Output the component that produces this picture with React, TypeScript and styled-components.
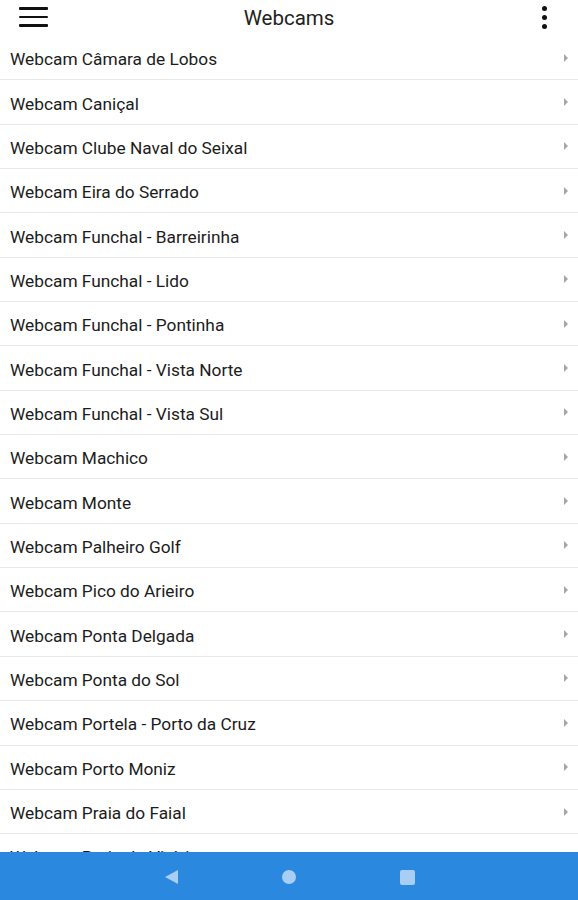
import styled, { createGlobalStyle } from 'styled-components';

const GlobalStyle = createGlobalStyle`
  html, body {
    margin: 0;
    padding: 0;
    background: #fff;
  }
  body {
    font-family: Roboto, 'Noto Sans', sans-serif;
  }
`;

const Screen = styled.div`
  width: 578px;
  height: 900px;
  display: flex;
  flex-direction: column;
  overflow: hidden;
  background: #fff;
`;

const Toolbar = styled.header`
  height: 36px;
  flex-shrink: 0;
  display: grid;
  grid-template-columns: 66px 1fr 66px;
  align-items: center;
`;

const MenuButton = styled.div`
  display: flex;
  flex-direction: column;
  gap: 6px;
  width: 29px;
  margin-left: 19px;
  margin-top: -2px;
  span {
    height: 2.6px;
    background: #111;
    border-radius: 1px;
  }
`;

const Title = styled.h1`
  margin: 0;
  text-align: center;
  font-size: 20.5px;
  font-weight: 400;
  color: #222;
  margin-top: -1px;
`;

const MoreButton = styled.div`
  justify-self: end;
  margin-right: 31px;
  margin-top: -1px;
  display: flex;
  flex-direction: column;
  gap: 4px;
  span {
    width: 5px;
    height: 5px;
    border-radius: 50%;
    background: #111;
  }
`;

const List = styled.ul`
  list-style: none;
  margin: 0;
  padding: 0;
  flex: 1;
  overflow: hidden;
`;

const Item = styled.li`
  height: 43.35px;
  box-sizing: content-box;
  border-bottom: 1px solid #e8e8e8;
  display: flex;
  align-items: center;
  justify-content: space-between;
  padding: 0 10px;
  font-size: 17.3px;
  color: #1c1c1c;
`;

const Label = styled.span`
  padding-top: 3px;
`;

const Chevron = styled.span`
  width: 0;
  height: 0;
  border-top: 4px solid transparent;
  border-bottom: 4px solid transparent;
  border-left: 4px solid #a6a6a6;
`;

const NavBar = styled.nav`
  height: 48px;
  flex-shrink: 0;
  background: #2a88de;
  display: flex;
  align-items: center;
  justify-content: center;
  gap: 104px;
  padding: 2px 0 0 2px;
  box-sizing: border-box;
`;

const Back = styled.span`
  width: 0;
  height: 0;
  border-top: 7.5px solid transparent;
  border-bottom: 7.5px solid transparent;
  border-right: 13px solid #a9cef5;
`;

const Home = styled.span`
  width: 14px;
  height: 14px;
  border-radius: 50%;
  background: #a9cef5;
`;

const Recent = styled.span`
  width: 15px;
  height: 15px;
  border-radius: 2px;
  background: #a9cef5;
`;

const webcams = [
  'Webcam Câmara de Lobos',
  'Webcam Caniçal',
  'Webcam Clube Naval do Seixal',
  'Webcam Eira do Serrado',
  'Webcam Funchal - Barreirinha',
  'Webcam Funchal - Lido',
  'Webcam Funchal - Pontinha',
  'Webcam Funchal - Vista Norte',
  'Webcam Funchal - Vista Sul',
  'Webcam Machico',
  'Webcam Monte',
  'Webcam Palheiro Golf',
  'Webcam Pico do Arieiro',
  'Webcam Ponta Delgada',
  'Webcam Ponta do Sol',
  'Webcam Portela - Porto da Cruz',
  'Webcam Porto Moniz',
  'Webcam Praia do Faial',
  'Webcam Praia da Vitória',
];

function App() {
  return (
    <>
      <GlobalStyle />
      <Screen>
        <Toolbar>
          <MenuButton>
            <span />
            <span />
            <span />
          </MenuButton>
          <Title>Webcams</Title>
          <MoreButton>
            <span />
            <span />
            <span />
          </MoreButton>
        </Toolbar>
        <List>
          {webcams.map((name) => (
            <Item key={name}>
              <Label>{name}</Label>
              <Chevron />
            </Item>
          ))}
        </List>
        <NavBar>
          <Back />
          <Home />
          <Recent />
        </NavBar>
      </Screen>
    </>
  );
}

export default App;
